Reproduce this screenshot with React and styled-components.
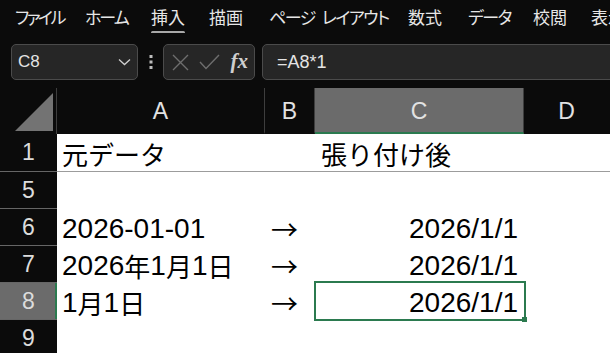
import React from 'react';
import styled, { createGlobalStyle } from 'styled-components';

const Global = createGlobalStyle`
  html, body { margin: 0; padding: 0; background: #0b0b0b; overflow: hidden; }
  body { width: 610px; height: 353px; font-family: "Liberation Sans", "Noto Sans CJK JP", sans-serif; }
`;

const Page = styled.div`
  width: 610px;
  height: 353px;
  overflow: hidden;
  background: #0b0b0b;
`;

const MenuBar = styled.nav`
  height: 33px;
  display: flex;
  align-items: center;
  padding-left: 15px;
  font-family: "Noto Sans CJK JP", sans-serif;
  font-size: 17px;
  font-feature-settings: "palt";
  color: #e6e6e6;
  white-space: nowrap;
  box-sizing: border-box;
  overflow: hidden;
`;

const MenuItem = styled.div`
  flex: none;
  width: ${p => (p.$w ? `${p.$w}px` : 'auto')};
  line-height: 33px;
`;

const MenuLabel = styled.span`
  position: relative;
  letter-spacing: ${p => p.$ls || 0}px;
  &::after {
    content: '';
    display: ${p => (p.$active ? 'block' : 'none')};
    position: absolute;
    left: 0;
    right: 0;
    bottom: -5px;
    height: 3px;
    border-radius: 2px;
    background: #a8a8a8;
  }
`;

const FormulaBar = styled.div`
  display: flex;
  align-items: stretch;
  height: 36px;
  padding: 11px 0 8px 11px;
`;

const Box = styled.div`
  box-sizing: border-box;
  height: 36px;
  background: #262626;
  border: 1px solid #4b4b4b;
  border-radius: 5px;
  display: flex;
  align-items: center;
`;

const NameBox = styled(Box)`
  width: 127px;
  padding: 0 6px 0 6px;
  justify-content: space-between;
  color: #e4e4e4;
  font-size: 17px;
`;

const Dots = styled.div`
  width: 25px;
  display: flex;
  align-items: center;
  justify-content: center;
`;

const FxBox = styled(Box)`
  width: 92px;
  padding: 0 6px 0 8px;
  justify-content: space-between;
`;

const Fx = styled.span`
  font-family: "Liberation Serif", serif;
  font-style: italic;
  font-weight: bold;
  font-size: 21px;
  color: #cfcfcf;
  line-height: 1;
  margin-top: -2px;
`;

const FormulaInput = styled(Box)`
  flex: 1;
  margin-left: 7px;
  margin-right: -10px;
  padding-left: 14px;
  color: #e4e4e4;
  font-size: 18px;
`;

const Sheet = styled.div`
  display: grid;
  grid-template-columns: 57px 208px 50px 209px 1fr;
  grid-template-rows: 46px 38px 37px 37px 37px 37px 37px;
`;

const Corner = styled.div`
  background: #0b0b0b;
  border-right: 1px solid #3e3e3e;
  display: flex;
  align-items: flex-end;
  justify-content: flex-end;
  padding: 0 3px 3px 0;
`;

const Triangle = styled.div`
  width: 38px;
  height: 38px;
  background: #737373;
  clip-path: polygon(100% 0, 100% 100%, 0 100%);
`;

const ColHead = styled.div`
  box-sizing: border-box;
  background: ${p => (p.$selected ? '#6b6b6b' : '#0b0b0b')};
  border-right: 1px solid ${p => (p.$last ? 'transparent' : '#3e3e3e')};
  border-bottom: 2px solid ${p => (p.$selected ? '#2b7a4f' : '#0b0b0b')};
  color: #e2e2e2;
  font-size: 23px;
  display: flex;
  align-items: center;
  justify-content: center;
  padding-top: 2px;
`;

const RowHead = styled.div`
  box-sizing: border-box;
  background: ${p => (p.$selected ? '#6b6b6b' : '#0b0b0b')};
  border-bottom: 1px solid #666;
  box-shadow: ${p => (p.$selected ? 'inset -2px 0 0 #2b7a4f' : 'none')};
  color: #dcdcdc;
  font-size: 23px;
  display: flex;
  align-items: center;
  justify-content: center;
`;

const Cell = styled.div`
  position: relative;
  box-sizing: border-box;
  background: #fff;
  color: #000;
  font-size: 28px;
  white-space: nowrap;
  display: flex;
  align-items: center;
  justify-content: ${p => (p.$right ? 'flex-end' : 'flex-start')};
  padding: 2px ${p => (p.$right ? '6px' : '0')} 0 ${p => p.$pad || 5}px;
  border-bottom: ${p => (p.$line ? '1px solid #9c9c9c' : 'none')};
`;

const Ja = styled.span`
  font-family: "Noto Sans CJK JP", sans-serif;
  font-size: 26px;
`;

const Arrow = styled.span`
  font-family: "Noto Sans CJK JP", sans-serif;
  font-size: 27px;
`;

const Selection = styled.div`
  position: absolute;
  left: -1px;
  right: -2px;
  top: -2px;
  bottom: -1px;
  border: 2px solid #2b7a4f;
  z-index: 2;
  pointer-events: none;
  &::after {
    content: '';
    position: absolute;
    right: -3px;
    bottom: -3px;
    width: 5px;
    height: 5px;
    background: #2b7a4f;
  }
`;

const menu = [
  { t: 'ファイル', w: 70, ls: -2.5 },
  { t: 'ホーム', w: 66, ls: -2 },
  { t: '挿入', w: 58, active: true },
  { t: '描画', w: 60 },
  { t: 'ページ\u2002レイアウト', w: 139, ls: -1.5 },
  { t: '数式', w: 60 },
  { t: 'データ', w: 65, ls: -1.5 },
  { t: '校閲', w: 58 },
  { t: '表示' },
];

const rows = [
  { n: '1', a: <Ja>元データ</Ja>, b: null, c: <Ja>張り付け後</Ja>, cLeft: true, line: true },
  { n: '5', a: null, b: null, c: null },
  { n: '6', a: '2026-01-01', b: true, c: '2026/1/1' },
  { n: '7', a: <>2026<Ja>年</Ja>1<Ja>月</Ja>1<Ja>日</Ja></>, b: true, c: '2026/1/1' },
  { n: '8', a: <>1<Ja>月</Ja>1<Ja>日</Ja></>, b: true, c: '2026/1/1', active: true },
  { n: '9', a: null, b: null, c: null },
];

export default function App() {
  return (
    <Page>
      <Global />
      <MenuBar>
        {menu.map(m => (
          <MenuItem key={m.t} $w={m.w}>
            <MenuLabel $active={m.active} $ls={m.ls}>{m.t}</MenuLabel>
          </MenuItem>
        ))}
      </MenuBar>
      <FormulaBar>
        <NameBox>
          <span>C8</span>
          <svg width="13" height="8" viewBox="0 0 13 8">
            <polyline points="1,1.5 6.5,6.5 12,1.5" fill="none" stroke="#cfcfcf" strokeWidth="1.3" />
          </svg>
        </NameBox>
        <Dots>
          <svg width="4" height="14" viewBox="0 0 4 14">
            <rect x="0.5" y="0" width="3" height="3" fill="#bdbdbd" />
            <rect x="0.5" y="5.5" width="3" height="3" fill="#bdbdbd" />
            <rect x="0.5" y="11" width="3" height="3" fill="#bdbdbd" />
          </svg>
        </Dots>
        <FxBox>
          <svg width="17" height="17" viewBox="0 0 17 17">
            <path d="M1 1 L16 16 M16 1 L1 16" stroke="#6e6e6e" strokeWidth="1.4" fill="none" />
          </svg>
          <svg width="21" height="16" viewBox="0 0 21 16">
            <polyline points="1,8 7,14.5 20,1" stroke="#6e6e6e" strokeWidth="1.4" fill="none" />
          </svg>
          <Fx>fx</Fx>
        </FxBox>
        <FormulaInput>=A8*1</FormulaInput>
      </FormulaBar>
      <Sheet>
        <Corner><Triangle /></Corner>
        <ColHead>A</ColHead>
        <ColHead>B</ColHead>
        <ColHead $selected>C</ColHead>
        <ColHead $last>D</ColHead>
        {rows.map(r => (
          <React.Fragment key={r.n}>
            <RowHead $selected={r.active}>{r.n}</RowHead>
            <Cell $line={r.line}>{r.a}</Cell>
            <Cell $line={r.line} $pad={6}>{r.b && <Arrow>→</Arrow>}</Cell>
            <Cell $line={r.line} $right={!r.cLeft} $pad={r.cLeft ? 6 : 0}>
              {r.c}
              {r.active && <Selection />}
            </Cell>
            <Cell $line={r.line} />
          </React.Fragment>
        ))}
      </Sheet>
    </Page>
  );
}
